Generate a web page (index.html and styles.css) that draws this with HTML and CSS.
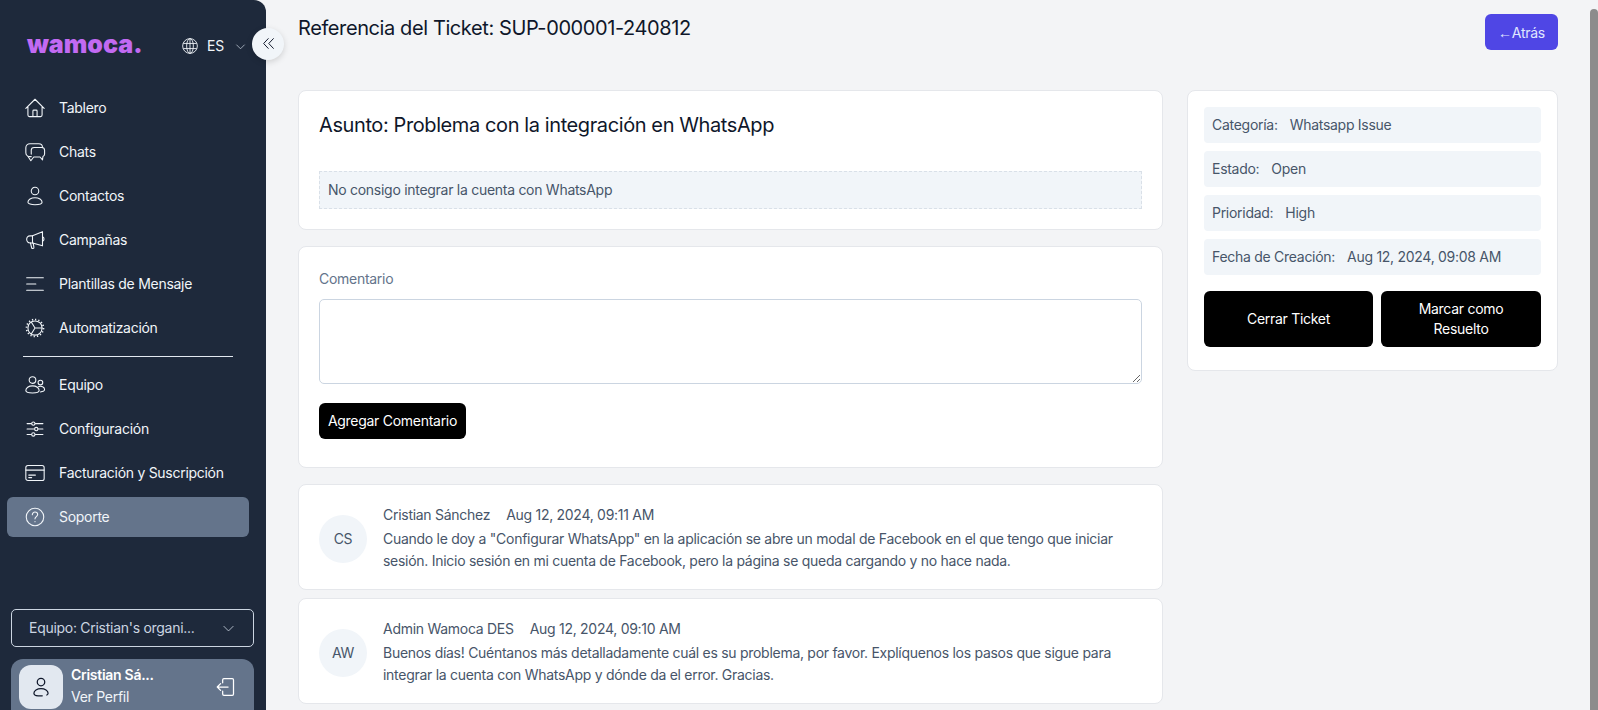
FILE: index.html
```html
<!DOCTYPE html>
<html lang="es">
<head>
<meta charset="utf-8">
<title>Ticket SUP-000001-240812</title>
<link rel="stylesheet" href="styles.css">
</head>
<body>
<div class="app">
  <aside class="sidebar">
    <div class="brand-row">
      <span class="logo">wamoca.</span>
      <div class="lang">
        <svg class="lang-globe" viewBox="0 0 20 20" fill="none" stroke="currentColor" stroke-width="1.1"><circle cx="10" cy="10" r="9.2"/><ellipse cx="10" cy="10" rx="4.2" ry="9.2"/><path d="M1.6 6.8h16.800M1.6 13.200h16.800M10 .8v18.400"/></svg>
        <span>ES</span>
        <svg class="chev" viewBox="0 0 24 24" fill="none" stroke="currentColor" stroke-width="1.6"><path d="M3 8l9 9 9-9"/></svg>
      </div>
    </div>
    <button class="collapse" aria-label="Contraer">
      <svg viewBox="0 0 24 24" fill="none" stroke="#0f172a" stroke-width="1.8" stroke-linecap="round" stroke-linejoin="round"><path d="M11.5 3 3 12l8.500 9M21 3l-8.500 9 8.500 9"/></svg>
    </button>
    <nav class="nav">
      <a class="nav-item"><svg viewBox="0 0 24 24"><path d="M1 12.500 12 1.500l11 11M3.500 10.500V20.500c0 1 .8 1.800 1.800 1.800h13.400c1 0 1.800-.8 1.800-1.800V10.500M9.500 22v-6.500c0-.6.4-1 1-1h3c.6 0 1 .4 1 1V22"/></svg>Tablero</a>
      <a class="nav-item"><svg viewBox="0 0 24 24"><path d="M7.500 17.500H6C3 17.500 1 15.500 1 12.500V7c0-3 2.200-5 5-5h10.500C19.500 2 21 3.500 21 6.500"/><path d="M3.500 17 7 22.500l3.500-4.500H18l3 3.500.5-4c1.300-.5 2-1.500 2-3V10c0-2-1.500-3.500-3.500-3.500h-9C9 6.500 7.500 8 7.500 10v4.500"/></svg>Chats</a>
      <a class="nav-item"><svg viewBox="0 0 24 24"><circle cx="12" cy="6" r="4.500"/><path d="M3.500 19.500c0-3 3.800-5.500 8.500-5.500s8.500 2.500 8.500 5.500c0 1.700-3.800 3-8.500 3s-8.500-1.300-8.500-3z"/></svg>Contactos</a>
      <a class="nav-item"><svg viewBox="0 0 24 24"><path d="M21 2v17L9 15.500H6C3.500 15.500 2 13.500 2 11.200S3.500 7 6 7h3z"/><path d="M9 7v8.500M21 8c1.200.4 1.800 1.500 1.800 2.700S22.200 13 21 13.500M6.500 15.500l1.500 5.800c.4 1.500 2.900 1.100 2.700-.5l-.8-5"/></svg>Campañas</a>
      <a class="nav-item"><svg viewBox="0 0 24 24"><path d="M2 4.500h20M2 12h11M2 19.500h20"/></svg>Plantillas de Mensaje</a>
      <a class="nav-item"><svg viewBox="0 0 24 24"><circle cx="12" cy="12" r="8.500"/><path d="M12 12 7.500 4.800M12 12h8.500M12 12l-4.500 7.200"/><path class="teeth" d="M12 1.800a10.200 10.200 0 1 1 0 20.400a10.200 10.200 0 1 1 0-20.400"/></svg>Automatización</a>
      <hr class="nav-divider">
      <a class="nav-item"><svg viewBox="0 0 24 24"><circle cx="9" cy="6" r="4"/><circle cx="18.500" cy="9" r="2.800"/><path d="M1 18.500c0-3 3.300-5.500 8-5.500s8 2.500 8 5.500c0 1.700-3.300 3-8 3s-8-1.300-8-3z"/><path d="M16 14c3.800-1.200 7.500.5 7.500 3.500 0 1.700-2 2.500-5 2.800"/></svg>Equipo</a>
      <a class="nav-item"><svg viewBox="0 0 24 24"><path d="M2.500 5.500h19M2.500 12h19M2.500 18.500h19"/><circle class="knob" cx="10" cy="5.500" r="2"/><circle class="knob" cx="13.500" cy="12" r="2"/><circle class="knob" cx="10" cy="18.500" r="2"/></svg>Configuración</a>
      <a class="nav-item"><svg viewBox="0 0 24 24"><rect x="1" y="3" width="22" height="18" rx="2.500"/><path d="M1 8.500h22M4.500 14.500h8M4.500 17.500h3.500"/></svg>Facturación y Suscripción</a>
      <a class="nav-item active"><svg viewBox="0 0 24 24"><circle cx="12" cy="12" r="10.500"/><path d="M8.800 9.300c0-1.900 1.400-3.300 3.200-3.300s3.200 1.300 3.200 3.100c0 2.500-3.200 2.500-3.200 5.100"/><path d="M12 17.500v.3"/></svg>Soporte</a>
    </nav>
    <div class="sidebar-foot">
      <div class="team-select">
        <span>Equipo: Cristian's organi...</span>
        <svg viewBox="0 0 24 24" fill="none" stroke="currentColor" stroke-width="1.5"><path d="M3 7.500l9 9 9-9"/></svg>
      </div>
      <div class="user-card">
        <div class="user-avatar">
          <svg viewBox="0 0 24 24" fill="none" stroke="#0f172a" stroke-width="1.5" stroke-linecap="round"><circle cx="12" cy="6" r="4.500"/><path d="M13.500 22.500H8.500c-3 0-5-1.300-5-3 0-3 3.800-5.500 8.500-5.500s8.500 2.500 8.500 5.500c0 .9-.5 1.600-1.500 2.100"/></svg>
        </div>
        <div class="user-text">
          <strong>Cristian Sá...</strong>
          <span>Ver Perfil</span>
        </div>
        <svg class="logout" viewBox="0 0 24 24" fill="none" stroke="#fff" stroke-width="1.5" stroke-linecap="round" stroke-linejoin="round"><path d="M8 7V3.500C8 2.600 8.700 2 9.500 2h10c.9 0 1.500.7 1.500 1.500v17c0 .9-.7 1.500-1.500 1.500h-10C8.600 22 8 21.300 8 20.500V17"/><path d="M14.500 12H1.500M5.500 8l-4 4 4 4"/></svg>
      </div>
    </div>
  </aside>

  <main class="main">
    <header class="page-head">
      <h1>Referencia del Ticket: SUP-000001-240812</h1>
      <button class="back-btn"><span class="arrow">←</span>Atrás</button>
    </header>
    <div class="columns">
      <div class="col-left">
        <section class="card subject-card">
          <h2>Asunto: Problema con la integración en WhatsApp</h2>
          <p class="description">No consigo integrar la cuenta con WhatsApp</p>
        </section>
        <section class="card comment-form">
          <label class="field-label" for="comment">Comentario</label>
          <textarea id="comment" class="comment-input"></textarea>
          <button class="black-btn add-btn">Agregar Comentario</button>
        </section>
        <article class="card comment">
          <div class="initials">CS</div>
          <div class="comment-body">
            <div class="comment-meta"><span>Cristian Sánchez</span><span>Aug 12, 2024, 09:11 AM</span></div>
            <p>Cuando le doy a "Configurar WhatsApp" en la aplicación se abre un modal de Facebook en el que tengo que iniciar sesión. Inicio sesión en mi cuenta de Facebook, pero la página se queda cargando y no hace nada.</p>
          </div>
        </article>
        <article class="card comment">
          <div class="initials">AW</div>
          <div class="comment-body">
            <div class="comment-meta"><span>Admin Wamoca DES</span><span>Aug 12, 2024, 09:10 AM</span></div>
            <p>Buenos días! Cuéntanos más detalladamente cuál es su problema, por favor. Explíquenos los pasos que sigue para integrar la cuenta con WhatsApp y dónde da el error. Gracias.</p>
          </div>
        </article>
      </div>
      <aside class="card info-card">
        <div class="info-row"><span>Categoría:</span><span>Whatsapp Issue</span></div>
        <div class="info-row"><span>Estado:</span><span>Open</span></div>
        <div class="info-row"><span>Prioridad:</span><span>High</span></div>
        <div class="info-row"><span>Fecha de Creación:</span><span>Aug 12, 2024, 09:08 AM</span></div>
        <div class="info-actions">
          <button class="black-btn close-btn">Cerrar Ticket</button>
          <button class="black-btn resolve-btn">Marcar como Resuelto</button>
        </div>
      </aside>
    </div>
  </main>
  <div class="scroll-track"><div class="scroll-thumb"></div></div>
</div>
</body>
</html>
```

FILE: styles.css
```css
* { box-sizing: border-box; }
html, body { margin: 0; height: 100%; overflow: hidden; }
body {
  font-family: Inter, "Liberation Sans", sans-serif;
  font-size: 14px;
  line-height: 20px;
  letter-spacing: -0.28px;
  background: #f3f4f6;
  color: #475569;
}
button { font-family: inherit; letter-spacing: inherit; cursor: pointer; border: 0; }
p, h1, h2 { margin: 0; }

.app { display: flex; height: 710px; overflow: hidden; }

/* Sidebar */
.sidebar {
  position: relative;
  flex: 0 0 266px;
  height: 710px;
  background: #1e293b;
  border-top-right-radius: 12px;
  color: #f1f5f9;
  display: flex;
  flex-direction: column;
}
.brand-row {
  display: flex;
  align-items: center;
  height: 46px;
  margin-top: 23px;
  padding-left: 27px;
}
.logo {
  width: 155px;
  font-family: Inter, sans-serif;
  font-weight: 900;
  font-size: 25px;
  line-height: 46px;
  letter-spacing: 0;
  color: #c26af2;
  position: relative;
  top: -2px;
}
.lang { display: flex; align-items: center; color: #f1f5f9; }
.lang-globe { width: 16px; height: 16px; margin-right: 9px; }
.chev { width: 11px; height: 11px; margin-left: 11px; color: #cbd5e1; }
.collapse {
  position: absolute;
  left: 252px;
  top: 28px;
  width: 32px;
  height: 32px;
  border-radius: 50%;
  background: #f1f5f9;
  box-shadow: 0 2px 6px rgba(0,0,0,.15);
  padding: 0;
  display: flex;
  align-items: center;
  justify-content: center;
  z-index: 2;
}
.collapse svg { width: 13px; height: 13px; margin-top: -2px; }
.nav { margin-top: 19px; padding: 0 17px 0 7px; display: flex; flex-direction: column; gap: 4px; }
.nav-item {
  display: flex;
  align-items: center;
  height: 40px;
  padding-left: 17px;
  border-radius: 6px;
  color: #f1f5f9;
  font-size: 14px;
}
.nav-item svg {
  width: 22px;
  height: 20px;
  margin-right: 13px;
  fill: none;
  stroke: #f1f5f9;
  stroke-width: 1.3;
  stroke-linecap: round;
  stroke-linejoin: round;
  flex: none;
}
.nav-item .knob { fill: #1e293b; }
.nav-item .teeth { stroke-width: 2; stroke-dasharray: 1.5 2.5; stroke-linecap: butt; }
.nav-item.active { background: #64748b; }
.nav-divider {
  width: 210px;
  height: 1px;
  margin: 4px 0 4px 16px;
  border: 0;
  background: #e2e8f0;
}
.sidebar-foot {
  margin-top: auto;
  padding: 0 12px 0 11px;
}
.team-select {
  display: flex;
  align-items: center;
  justify-content: space-between;
  height: 38px;
  padding: 0 18px 0 17px;
  border: 1px solid #cbd5e1;
  border-radius: 5px;
  color: #cbd5e1;
  font-size: 14px;
}
.team-select svg { width: 13px; height: 13px; }
.user-card {
  display: flex;
  align-items: flex-start;
  height: 51px;
  margin-top: 12px;
  padding: 6px 18px 0 8px;
  background: #64748b;
  border-radius: 12px 12px 0 0;
  color: #f1f5f9;
}
.user-avatar {
  width: 44px;
  height: 44px;
  border-radius: 12px;
  background: #e2e8f0;
  display: flex;
  align-items: center;
  justify-content: center;
  flex: none;
}
.user-avatar svg { width: 20px; height: 22px; }
.user-text { flex: 1; margin-left: 8px; display: flex; flex-direction: column; gap: 2px; }
.user-text strong { font-weight: 600; color: #fff; }
.logout { width: 20px; height: 20px; margin-top: 12px; }

/* Main */
.main { flex: 1; min-width: 0; padding: 14px 32px 0; }
.page-head { display: flex; justify-content: space-between; align-items: flex-start; height: 76px; }
.page-head h1 {
  font-size: 20px;
  line-height: 28px;
  font-weight: 400;
  letter-spacing: -0.4px;
  color: #0f172a;
}
.back-btn {
  width: 73px;
  height: 36px;
  padding: 0;
  border-radius: 6px;
  background: #4f46e5;
  color: #e0e7ff;
  font-size: 14px;
}
.arrow { font-family: "Liberation Sans", sans-serif; }
.columns { display: flex; gap: 24px; align-items: flex-start; }
.col-left { width: 865px; display: flex; flex-direction: column; gap: 16px; }
.card {
  background: #fff;
  border: 1px solid #e5e7eb;
  border-radius: 8px;
}
.subject-card { padding: 20px; height: 140px; }
.subject-card h2 {
  font-size: 20px;
  line-height: 28px;
  font-weight: 400;
  letter-spacing: -0.4px;
  color: #0f172a;
}
.description {
  margin-top: 32px;
  height: 38px;
  padding: 8px;
  background: #f1f5f9;
  border: 1px dashed #d9e0e8;
  line-height: 20px;
}
.comment-form { padding: 22px 20px 0; height: 222px; display: flex; flex-direction: column; align-items: flex-start; }
.field-label { color: #64748b; line-height: 20px; }
.comment-input {
  display: block;
  width: 100%;
  height: 85px;
  margin-top: 10px;
  border: 1px solid #cbd5e1;
  border-radius: 5px;
  background: #fff;
  resize: vertical;
}
.black-btn { background: #000; color: #fff; border-radius: 6px; font-size: 14px; line-height: 20px; }
.add-btn { margin-top: 19px; width: 147px; height: 36px; padding: 0; }
.comment { display: flex; height: 106px; padding: 27px 20px 0; gap: 16px; margin-bottom: -8px; }
.initials {
  width: 48px;
  height: 48px;
  border-radius: 50%;
  background: #f1f5f9;
  color: #475569;
  display: flex;
  align-items: center;
  justify-content: center;
  flex: none;
  margin-top: 3px;
}
.comment-body { margin-top: -7px; flex: 1; min-width: 0; }
.comment-meta { display: flex; gap: 16px; color: #475569; }
.comment-body p { margin-top: 3px; line-height: 22px; color: #475569; }

.info-card { width: 371px; padding: 16px; height: 281px; display: flex; flex-direction: column; gap: 8px; }
.info-row {
  display: flex;
  gap: 12px;
  height: 36px;
  align-items: center;
  padding: 0 8px;
  background: #f1f5f9;
  border-radius: 4px;
}
.info-actions { display: flex; gap: 8px; margin-top: 8px; }
.info-actions .black-btn { height: 56px; }
.close-btn { width: 169px; }
.resolve-btn { width: 160px; padding: 0 24px; }

.scroll-track { flex: 0 0 8px; padding-top: 9px; background: #f3f4f6; }
.scroll-thumb { height: 100%; background: #8c8c8c; border-radius: 4px 4px 0 0; }
```
